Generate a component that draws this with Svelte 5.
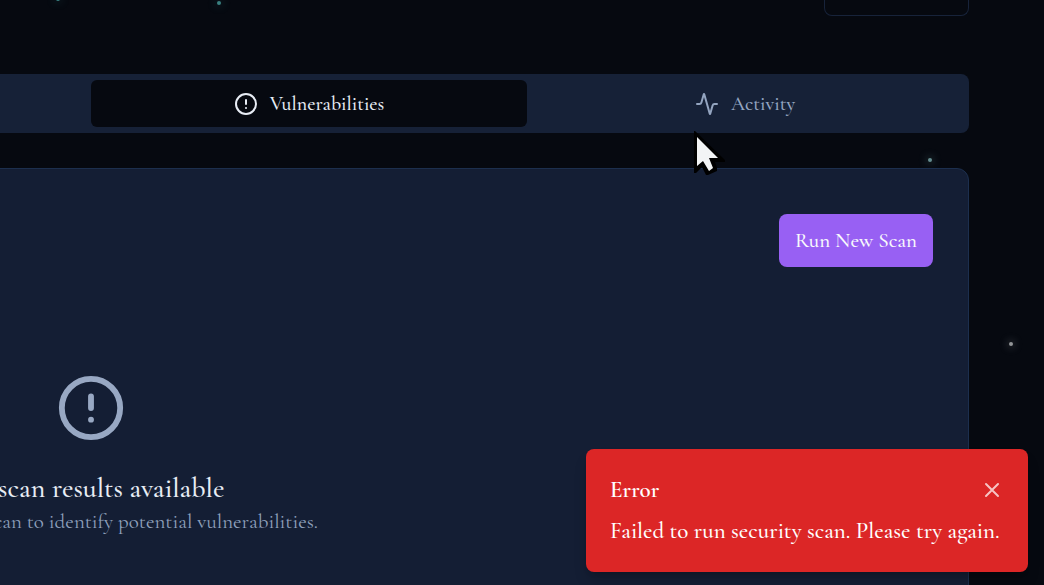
<script>
  const stars = [
    { x: 58, y: -1, tone: 'teal' },
    { x: 219, y: 3, tone: 'teal' },
    { x: 930, y: 160, tone: 'mist' },
    { x: 1011, y: 344, tone: 'grey' }
  ];
  let selected = $state('vulnerabilities');
  let open = $state(true);
</script>

<div class="page">
  {#each stars as star}
    <i class="star {star.tone}" style="left: {star.x}px; top: {star.y}px"></i>
  {/each}

  <main>
    <div class="top-box"></div>

    <div class="tabs" role="tablist">
      <button class="tab vulnerabilities" class:active={selected === 'vulnerabilities'} role="tab"
        aria-selected={selected === 'vulnerabilities'} onclick={() => (selected = 'vulnerabilities')}>
        <svg width="24" height="24" viewBox="0 0 24 24"><circle cx="12" cy="12" r="10" /><path d="M12 8v4M12 16h.01" /></svg>
        Vulnerabilities
      </button>
      <button class="tab" class:active={selected === 'activity'} role="tab"
        aria-selected={selected === 'activity'} onclick={() => (selected = 'activity')}>
        <svg width="24" height="24" viewBox="0 0 24 24"><path d="M22 12h-2.48a2 2 0 0 0-1.93 1.46l-2.35 8.36a.25.25 0 0 1-.48 0L9.24 2.18a.25.25 0 0 0-.48 0l-2.35 8.36A2 2 0 0 1 4.49 12H2" /></svg>
        Activity
      </button>
    </div>

    <section class="panel">
      <header><button class="scan">Run New Scan</button></header>
      <div class="empty">
        <svg width="70" height="70" viewBox="0 0 24 24"><circle cx="12" cy="12" r="10" /><path d="M12 8v4M12 16h.01" /></svg>
        <h3>No scan results available</h3>
        <p>Run a security scan to identify potential vulnerabilities.</p>
      </div>
    </section>
  </main>

  {#if open}
    <div class="toast" role="alert">
      <div class="toast-head">
        <strong>Error</strong>
        <button class="close" aria-label="Close" onclick={() => (open = false)}>
          <svg width="24" height="24" viewBox="0 0 24 24"><path d="M18 6 6 18M6 6l12 12" /></svg>
        </button>
      </div>
      <p>Failed to run security scan. Please try again.</p>
    </div>
  {/if}

  <svg class="pointer" width="32" height="46" viewBox="0 0 32 46">
    <path d="M1 0H2L32 29V31H22L24 37V40L15 44H13L9 36 3 42H1Z" fill="#000" />
    <path d="M4 6 25 27H16L20 37 16 40 10 30 4 35Z" fill="#f2f4f5" />
  </svg>
</div>

<style>
  :global(body) {
    margin: 0;
    background: #060910;
  }
  .page {
    position: relative;
    height: 100vh;
    overflow: hidden;
    font-family: "Cormorant Garamond", "Liberation Serif", serif;
    font-size: 20px;
    line-height: 28px;
    color: #e8edf5;
  }
  button {
    border: 0;
    font: inherit;
    font-weight: 500;
    cursor: pointer;
  }
  svg {
    fill: none;
    stroke: currentColor;
    stroke-width: 2;
    stroke-linecap: round;
    stroke-linejoin: round;
    flex: none;
  }
  h3, p {
    margin: 0;
    white-space: nowrap;
  }
  main {
    position: relative;
    display: flex;
    flex-direction: column;
    min-height: calc(100% + 40px);
    margin: 0 75px 0 -787px;
  }
  .top-box {
    box-sizing: border-box;
    align-self: flex-end;
    width: 145px;
    height: 16px;
    border: 1px solid #17233a;
    border-top: 0;
    border-radius: 0 0 8px 8px;
  }
  .tabs {
    display: grid;
    grid-template-columns: repeat(4, 1fr);
    margin-top: 58px;
    padding: 6px;
    border-radius: 8px;
    background: #162137;
  }
  .tab {
    display: flex;
    align-items: center;
    justify-content: center;
    gap: 12px;
    height: 47px;
    padding: 0;
    border-radius: 6px;
    background: none;
    color: #94a5c0;
  }
  .vulnerabilities {
    grid-column: 3;
  }
  .tab.active {
    background: #060910;
    color: #e8edf5;
  }
  .panel {
    flex: 1;
    margin-top: 35px;
    padding: 45px 35px;
    border: 1px solid #1c2f4e;
    border-radius: 12px;
    background: #141e34;
  }
  header {
    display: flex;
    justify-content: flex-end;
  }
  .scan {
    height: 53px;
    padding: 0 16px;
    border-radius: 8px;
    background: #9860f3;
    color: #f8fafc;
    font-size: 21px;
  }
  .empty {
    display: flex;
    flex-direction: column;
    align-items: center;
    padding-top: 106px;
    color: #98a8c3;
  }
  h3 {
    margin-top: 27px;
    font-size: 28px;
    font-weight: 500;
    line-height: 36px;
    color: #e8edf5;
  }
  .empty p {
    margin-top: 2px;
    font-size: 21px;
    color: #8fa0bc;
  }
  .toast {
    position: absolute;
    right: 16px;
    bottom: 13px;
    box-sizing: border-box;
    min-width: 442px;
    padding: 24px;
    border-radius: 8px;
    background: #dc2626;
    box-shadow: 0 10px 15px -3px #0003, 0 4px 6px -4px #0003;
    color: #fff;
    font-size: 23px;
    font-weight: 500;
    line-height: 34px;
  }
  .toast-head {
    display: flex;
    align-items: center;
    justify-content: space-between;
    margin-bottom: 7px;
  }
  .toast-head strong {
    font-weight: 600;
  }
  .close {
    display: flex;
    padding: 0;
    background: none;
    color: #f6c3c3;
  }
  .star {
    position: absolute;
    width: 4px;
    height: 4px;
    border-radius: 50%;
    transform: translate(-50%, -50%);
  }
  .teal {
    background: #398080;
    box-shadow: 0 0 10px 1px #39808055;
  }
  .mist {
    background: #658d90;
    box-shadow: 0 0 8px 1px #658d9077;
  }
  .grey {
    background: #939598;
    box-shadow: 0 0 8px 1px #93959877;
  }
  .pointer {
    position: absolute;
    left: 693px;
    top: 131px;
    stroke: none;
  }
</style>
